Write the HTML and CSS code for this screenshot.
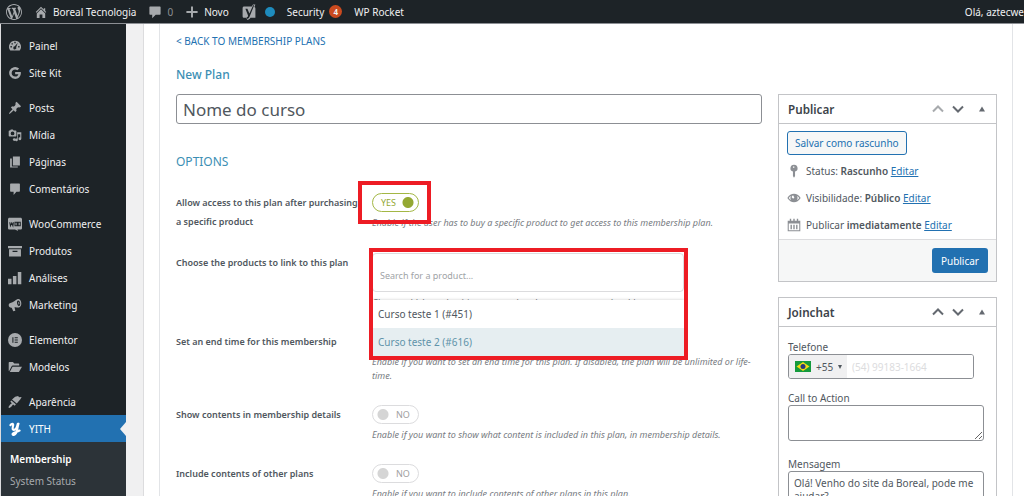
FILE: index.html
```html
<!DOCTYPE html>
<html lang="pt-BR">
<head>
<meta charset="utf-8">
<meta name="viewport" content="width=device-width, initial-scale=1">
<title>Boreal Tecnologia</title>
<link rel="stylesheet" href="styles.css">
</head>
<body>
<header class="bar">
  <a class="bar-item bar-logo" href="#" aria-label="WordPress">
    <svg class="ico-lg" viewBox="0 0 20 20"><path d="M20 10c0-5.51-4.49-10-10-10C4.48 0 0 4.49 0 10c0 5.52 4.48 10 10 10 5.51 0 10-4.48 10-10zM7.78 15.37L4.37 6.22c.55-.02 1.17-.08 1.17-.08.5-.06.44-1.13-.06-1.11 0 0-1.45.11-2.37.11-.18 0-.37 0-.58-.01C4.12 2.69 6.87 1.11 10 1.11c2.33 0 4.45.87 6.05 2.34-.68-.11-1.65.39-1.65 1.58 0 .74.45 1.36.9 2.1.35.61.55 1.36.55 2.46 0 1.49-1.4 5-1.4 5l-3.03-8.37c.54-.02.82-.17.82-.17.5-.05.44-1.25-.06-1.22 0 0-1.44.12-2.38.12-.87 0-2.33-.12-2.33-.12-.5-.03-.56 1.2-.06 1.22l.92.08 1.26 3.41zM17.41 10c.24-.64.74-1.87.43-4.25.7 1.29 1.05 2.71 1.05 4.25 0 3.29-1.73 6.24-4.4 7.78.97-2.59 1.94-5.2 2.92-7.78zM6.1 18.09C3.12 16.65 1.11 13.53 1.11 10c0-1.3.23-2.48.72-3.59C3.25 10.3 4.67 14.2 6.1 18.09zm4.03-6.63l2.58 6.98c-.86.29-1.76.45-2.71.45-.79 0-1.57-.11-2.29-.33.81-2.38 1.62-4.74 2.42-7.1z"/></svg>
  </a>
  <a class="bar-item" href="#">
    <svg class="ico" viewBox="0 0 20 20"><path d="M16 8.5l1.530 1.530-1.060 1.060L10 4.600l-6.470 6.490-1.060-1.060L10 2.500l4 4v-2h2v4zm-6-2.460l6 5.990V18.500H12v-5H8v5H4v-6.470z"/></svg>
    <span>Boreal Tecnologia</span>
  </a>
  <a class="bar-item bar-dim" href="#">
    <svg class="ico" viewBox="0 0 20 20"><path d="M3 2h14c.6 0 1 .4 1 1v10c0 .6-.4 1-1 1h-6l-5 5v-5H3c-.6 0-1-.4-1-1V3c0-.6.400-1 1-1z"/></svg>
    <span>0</span>
  </a>
  <a class="bar-item" href="#">
    <svg class="ico" viewBox="0 0 20 20"><path d="M8.600 2h2.800v6.600H18v2.800h-6.600V18H8.600v-6.600H2V8.600h6.600z"/></svg>
    <span>Novo</span>
  </a>
  <a class="bar-item" href="#" aria-label="SEO">
    <svg class="ico-yoast" viewBox="0 0 20 20"><path fill-rule="evenodd" d="M4 3h9.500L15 .5h3L16.800 3.600c.8.400 1.200 1 1.200 1.900v11.800h-6.200c-1 1.700-2.300 2.500-4.300 2.500v-2.500H4c-1.200 0-2-.8-2-2V5c0-1.200.8-2 2-2zM5.500 6l3.200 8.200c.3 1.500-.2 2.300-1.700 2.600v1.700c2-.1 3-1 3.800-3L16.500 1.500h-1.300L10.500 12 8 6z"/></svg>
    <i class="dot"></i>
  </a>
  <a class="bar-item" href="#"><span>Security</span><b class="count">4</b></a>
  <a class="bar-item" href="#"><span>WP Rocket</span></a>
  <a class="bar-item bar-user" href="#"><span>Olá, aztecwe</span></a>
</header>

<div class="layout">
  <nav class="menu" aria-label="Menu principal">
    <ul class="group">
      <li><a class="entry" href="#"><svg class="ico" viewBox="0 0 20 20"><path fill-rule="evenodd" d="M10 2.500a8.500 8.500 0 0 1 7 13.400c-.3.400-.7.600-1.200.6H4.200c-.5 0-.9-.2-1.200-.6A8.500 8.500 0 0 1 10 2.500zM9 4v2h2V4zM5 6v2h2V6zM3.500 10v2h2v-2zM14.500 10v2h2v-2zM14 5.500l-4.300 5a2.200 2.200 0 1 0 2 1.200z"/></svg>Painel</a></li>
      <li><a class="entry" href="#"><svg class="ico" viewBox="0 0 20 20"><path d="M10.200 8.500h8.100c.1.500.1 1 .1 1.600 0 4.900-3.300 8.400-8.200 8.400A8.500 8.500 0 1 1 15.900 3.700l-2.500 2.400A5 5 0 0 0 5.200 10c0 2.800 2.200 5.100 5 5.100 3.200 0 4.400-2.200 4.600-3.400h-4.600z"/></svg>Site Kit</a></li>
    </ul>
    <ul class="group">
      <li><a class="entry" href="#"><svg class="ico" viewBox="0 0 20 20"><path d="M10.440 3.020l1.820-1.820 6.360 6.350-1.830 1.820c-1.050-.68-2.480-.57-3.410.36l-.75.75c-.92.93-1.040 2.350-.350 3.410l-1.830 1.820-2.410-2.410-2.800 2.790c-.42.42-3.380 2.710-3.800 2.290s1.860-3.390 2.280-3.810l2.790-2.790L4.100 9.360l1.830-1.820c1.050.69 2.480.57 3.400-.36l.75-.75c.93-.92 1.050-2.350.36-3.410z"/></svg>Posts</a></li>
      <li><a class="entry" href="#"><svg class="ico" viewBox="0 0 20 20"><path fill-rule="evenodd" d="M4 2h3l1 1.500h3c.6 0 1 .4 1 1V11c0 .6-.4 1-1 1H2c-.6 0-1-.4-1-1V4.500c0-.6.400-1 1-1h1zM6.500 5a2.700 2.700 0 1 0 0 5.400 2.700 2.700 0 0 0 0-5.400z"/><path d="M13 6h6v9.500a2 2 0 1 1-1.500-2V8.800H14V17a2 2 0 1 1-1.500-2H13z"/><circle cx="9" cy="16.500" r="2"/></svg>Mídia</a></li>
      <li><a class="entry" href="#"><svg class="ico" viewBox="0 0 20 20"><path d="M7 2h10v13H7zM3 5h2.500v11.500H14V18H3z"/></svg>Páginas</a></li>
      <li><a class="entry" href="#"><svg class="ico" viewBox="0 0 20 20"><path d="M4 2h12c.6 0 1 .4 1 1v10c0 .6-.4 1-1 1h-4l-4 4.500V14H4c-.6 0-1-.4-1-1V3c0-.6.400-1 1-1z"/></svg>Comentários</a></li>
    </ul>
    <ul class="group">
      <li><a class="entry" href="#"><svg class="ico" viewBox="0 0 20 20"><path d="M2 1h16c1 0 2 1 2 2v13c0 1-1 2-2 2h-4.500l1 2-4.500-2H2c-1 0-2-1-2-2V3c0-1 1-2 2-2z"/><path class="cut" d="M2.500 7.500l1 5 1.800-4 1.700 4 .7-5M13 7.500h-3v5h3zM17.500 7.500h-3v5h3z"/></svg>WooCommerce</a></li>
      <li><a class="entry" href="#"><svg class="ico" viewBox="0 0 20 20"><path fill-rule="evenodd" d="M0 3h20v3H0zM1.500 7.500h17V18h-17zM6.500 9.500v2h7v-2z"/></svg>Produtos</a></li>
      <li><a class="entry" href="#"><svg class="ico" viewBox="0 0 20 20"><path d="M0 11h5v8H0zM7 7h5v12H7zM14 1.500h5V19h-5z"/></svg>Análises</a></li>
      <li><a class="entry" href="#"><svg class="ico" viewBox="0 0 20 20"><path fill-rule="evenodd" d="M14 1.500c2.800-.5 4.800 2.400 5 6 .2 3.200-1.300 5.600-3.500 6-2.300.1-4.600-.8-6.200-.3l1.200 5-3 .9-2.200-5.300C3 14 1 12.500 1 10.300 1 8.500 2 7.700 3.500 7.300 8 6.300 10 3 14 1.500zM14.500 3.500c-1.500.3-1.900 2.300-1.500 4.500.4 2.300 1.500 3.800 2.800 3.600 1.300-.3 1.900-2.200 1.500-4.300-.3-2.300-1.500-4-2.800-3.800zm.2 2.200c.9 0 1.400.8 1.500 1.900 0 1-.4 1.700-1.200 1.700z"/></svg>Marketing</a></li>
    </ul>
    <ul class="group">
      <li><a class="entry" href="#"><svg class="ico" viewBox="0 0 20 20"><circle cx="10" cy="10" r="10"/><path class="cut" d="M7 6v8M9.500 6.800H14M9.500 10H14M9.500 13.200H14"/></svg>Elementor</a></li>
      <li><a class="entry" href="#"><svg class="ico" viewBox="0 0 20 20"><path d="M1 4c0-.6.400-1 1-1h5l2 2h6c.6 0 1 .4 1 1v2H7c-1 0-1.700.4-2 1.200L1.500 16 1 15.500zM6.500 9.500H20l-4 6.800c-.3.500-.7.700-1.200.7H2.500z"/></svg>Modelos</a></li>
    </ul>
    <ul class="group">
      <li><a class="entry" href="#"><svg class="ico" viewBox="0 0 20 20"><path d="M14.500 1.500l1.200 1.700 3.800-.2-1.800 3.200-5.200 6-6.800-5.700 4.500-4zM4.800 7.800l6.500 5.500-1.600 1.900-2.500-1.500c-1.300 2-3.500 4.600-5.500 4.800-1.200-.4-1-1.500-.4-2.600.9-1.500 2.600-2.800 4.200-4L3.300 9.800z"/></svg>Aparência</a></li>
      <li>
        <a class="entry current" href="#"><svg class="ico" viewBox="2 0 17 20"><path class="swash" d="M4 4.500C5.500 2 8.500 1.800 7.800 5 7 8.500 6.500 11.500 9 11.300c3-.3 4.500-4.500 5.500-8.800M15.500 2.500c-1.500 5-2 10-3.500 13.500-1.300 3-5 3-5 1.200 0-2 5-2.700 10-5"/></svg>YITH</a>
        <ul class="sub">
          <li><a class="sub-on" href="#">Membership</a></li>
          <li><a href="#">System Status</a></li>
        </ul>
      </li>
    </ul>
  </nav>

  <main class="stage">
    <div class="panel">
      <div class="plan">
        <a class="back" href="#">&lt; BACK TO MEMBERSHIP PLANS</a>
        <h1>New Plan</h1>
        <input class="title" type="text" value="Nome do curso" aria-label="Nome do plano">
        <h2>OPTIONS</h2>
        <div class="rows">
          <div class="row">
            <label for="access">Allow access to this plan after purchasing a specific product</label>
            <div class="field marked-toggle">
              <span class="switch"><input type="checkbox" id="access" checked><span class="yes">YES</span><span class="no">NO</span></span>
              <p>Enable if the user has to buy a specific product to get access to this membership plan.</p>
            </div>
          </div>
          <div class="row">
            <label for="products">Choose the products to link to this plan</label>
            <div class="field marked-search">
              <input class="search" id="products" type="text" placeholder="Search for a product...">
              <p>Choose which product(s) a user needs to buy to access membership.</p>
              <ul class="options">
                <li>Curso teste 1 (#451)</li>
                <li class="hover">Curso teste 2 (#616)</li>
              </ul>
            </div>
          </div>
          <div class="row">
            <label for="endtime">Set an end time for this membership</label>
            <div class="field">
              <span class="switch"><input type="checkbox" id="endtime"></span>
              <p>Enable if you want to set an end time for this plan. If disabled, the plan will be unlimited or life-time.</p>
            </div>
          </div>
          <div class="row">
            <label for="contents">Show contents in membership details</label>
            <div class="field">
              <span class="switch"><input type="checkbox" id="contents"><span class="yes">YES</span><span class="no">NO</span></span>
              <p>Enable if you want to show what content is included in this plan, in membership details.</p>
            </div>
          </div>
          <div class="row">
            <label for="others">Include contents of other plans</label>
            <div class="field">
              <span class="switch"><input type="checkbox" id="others"><span class="yes">YES</span><span class="no">NO</span></span>
              <p>Enable if you want to include contents of other plans in this plan.</p>
            </div>
          </div>
        </div>
      </div>

      <aside class="side">
        <section class="box">
          <div class="box-head">
            <h3>Publicar</h3>
            <button class="arrow faded" type="button" aria-label="Subir"><svg viewBox="0 0 12 12"><path d="M1 8.500l5-5 5 5"/></svg></button>
            <button class="arrow" type="button" aria-label="Descer"><svg viewBox="0 0 12 12"><path d="M1 3.500l5 5 5-5"/></svg></button>
            <button class="arrow fold" type="button" aria-label="Alternar"><svg viewBox="0 0 12 12"><path d="M3 8.500h6L6 3.500z"/></svg></button>
          </div>
          <div class="publish">
            <button class="draft" type="button">Salvar como rascunho</button>
            <p><svg class="ico-sm" viewBox="0 0 20 20"><path fill-rule="evenodd" d="M10 1a5 5 0 0 1 1.500 9.800V17L10 19.500 8.500 17v-6.200A5 5 0 0 1 10 1zM8.500 3.500v2h2v-2z"/></svg><span>Status: <b>Rascunho</b> <a href="#">Editar</a></span></p>
            <p><svg class="ico-sm" viewBox="0 0 20 20"><path fill-rule="evenodd" d="M.500 10C3 6 6.300 4 10 4s7 2 9.500 6c-2.500 4-5.800 6-9.500 6S3 14 .5 10zM2.500 10c1 1.500 2 2.600 3.300 3.300-1.200-2-1.200-4.600 0-6.600C4.500 7.400 3.500 8.500 2.500 10zm15 0c-1-1.500-2-2.600-3.300-3.300 1.200 2 1.200 4.600 0 6.600 1.300-.7 2.300-1.800 3.300-3.300zM9 6.500a2 2 0 1 0 1.500 3z"/></svg><span>Visibilidade: <b>Público</b> <a href="#">Editar</a></span></p>
            <p><svg class="ico-sm" viewBox="0 0 20 20"><path fill-rule="evenodd" d="M1 4h3V1h2v3h3V1h2v3h3V1h2v3h3v15H1zM2.500 8v9.500h15V8zM5 9.500h2v6.500H5zM9 9.500h2v6.500H9zM13 9.500h2v6.500h-2z"/></svg><span>Publicar <b>imediatamente</b> <a href="#">Editar</a></span></p>
          </div>
          <div class="box-foot"><button class="primary" type="button">Publicar</button></div>
        </section>

        <section class="box">
          <div class="box-head">
            <h3>Joinchat</h3>
            <button class="arrow" type="button" aria-label="Subir"><svg viewBox="0 0 12 12"><path d="M1 8.500l5-5 5 5"/></svg></button>
            <button class="arrow" type="button" aria-label="Descer"><svg viewBox="0 0 12 12"><path d="M1 3.500l5 5 5-5"/></svg></button>
            <button class="arrow fold" type="button" aria-label="Alternar"><svg viewBox="0 0 12 12"><path d="M3 8.500h6L6 3.500z"/></svg></button>
          </div>
          <div class="chat">
            <label for="phone">Telefone</label>
            <div class="phone">
              <button type="button" aria-label="País: Brasil +55"><svg class="flag" viewBox="0 0 16 11"><rect width="16" height="11" fill="#149a3c"/><path d="M8 1l6.500 4.500L8 10 1.500 5.500z" fill="#f5dc14"/><circle cx="8" cy="5.500" r="2.500" fill="#26397c"/></svg><span>+55</span><i class="caret"></i></button>
              <input id="phone" type="tel" placeholder="(54) 99183-1664">
            </div>
            <label for="cta">Call to Action</label>
            <textarea id="cta"></textarea>
            <label for="msg">Mensagem</label>
            <textarea id="msg" class="tall">Olá! Venho do site da Boreal, pode me ajudar?</textarea>
          </div>
        </section>
      </aside>
    </div>
  </main>
</div>
</body>
</html>
```

FILE: styles.css
```css
*, *::before, *::after { box-sizing: border-box; }

body {
  margin: 0;
  height: 100vh;
  overflow: hidden;
  display: flex;
  flex-direction: column;
  background: #f0f0f1;
  color: #50575e;
  font: 10px/16px "Noto Sans", "Open Sans", sans-serif;
}

ul { list-style: none; margin: 0; padding: 0; }
h1, h2, h3, p { margin: 0; font-weight: 400; }
button, input, textarea { font: inherit; color: inherit; margin: 0; }
a { color: #2271b1; }
svg { flex: none; }

.ico { width: 14px; height: 14px; fill: #a7aaad; }
.ico-lg { width: 16px; height: 16px; fill: #a7aaad; }
.ico-yoast { width: 16px; height: 16px; fill: #a7aaad; }
.ico-sm { width: 14px; height: 14px; fill: #8c8f94; }
.cut { fill: none; stroke: #1d2327; stroke-width: 1.5; }
.swash { fill: none; stroke: #fff; stroke-width: 3; stroke-linecap: round; }

/* Admin bar */
.bar {
  flex: none;
  height: 24px;
  display: flex;
  align-items: center;
  gap: 12px;
  padding-left: 6px;
  background: #1d2327;
  border-bottom: 1px solid #8c8f94;
  white-space: nowrap;
}
.bar-item { display: flex; align-items: center; gap: 5px; color: #f0f0f1; text-decoration: none; }
.bar-dim { color: #8c8f94; }
.dot { width: 10px; height: 10px; margin-left: 3px; border-radius: 50%; background: #1e8cbe; }
.count {
  width: 13px;
  height: 13px;
  border-radius: 50%;
  background: #ca4a1f;
  font-size: 8px;
  line-height: 13px;
  text-align: center;
}
.bar-user { margin-left: auto; }

/* Side menu */
.layout { flex: 1; min-height: 0; display: flex; }
.menu {
  flex: none;
  width: 126px;
  padding-top: 8px;
  background: #1d2327;
  border-left: 1px solid #dcdcde;
}
.group + .group { margin-top: 8px; }
.entry {
  position: relative;
  display: flex;
  align-items: center;
  gap: 7px;
  height: 27px;
  padding-left: 7px;
  color: #f0f0f1;
  text-decoration: none;
}
.current { background: #2271b1; color: #fff; }
.current::after {
  content: "";
  position: absolute;
  right: 0;
  top: 7px;
  border: 7px solid transparent;
  border-left-width: 0;
  border-right: 6px solid #f0f0f1;
}
.sub { padding: 6px 0 20px 9px; background: #2c3338; line-height: 22px; }
.sub a { color: #a7aaad; text-decoration: none; }
.sub .sub-on { color: #fff; font-weight: 600; }

/* Content */
.stage { flex: 1; min-width: 0; padding-left: 17px; overflow: hidden; }
.panel {
  position: relative;
  display: flex;
  gap: 16px;
  min-height: 100%;
  padding: 9px 27px 0 32px;
  background: #fff;
  border-left: 1px solid #dcdcde;
}
.panel::before {
  content: "";
  position: absolute;
  inset: 0 11px 0 15px;
  border: 1px solid #e2e4e7;
  border-width: 0 1px;
}
.plan, .side { position: relative; }
.plan { flex: 1; min-width: 0; }
.side { flex: none; width: 219px; padding-top: 61px; }

.back { display: block; text-decoration: none; }
h1 { margin-top: 17px; font-size: 12px; line-height: 18px; font-weight: 500; color: #3c8fb4; }
.title {
  display: block;
  width: 100%;
  height: 30px;
  margin-top: 10px;
  padding: 0 6px;
  border: 1px solid #8c8f94;
  border-radius: 3px;
  font-size: 17px;
}
h2 { margin-top: 29px; font-size: 12px; line-height: 18px; color: #3c8fb4; }

.rows { display: grid; gap: 22px; margin-top: 22px; }
.row { display: grid; grid-template-columns: 196px 1fr; line-height: 19px; font-size: 9px; }
.row label { padding-right: 12px; font-weight: 600; }
.field { position: relative; }
.field p { margin-top: 4px; line-height: 14px; font-style: italic; color: #787c82; }

.switch { position: relative; display: block; width: 47px; height: 19px; }
.switch input {
  appearance: none;
  display: block;
  width: 47px;
  height: 19px;
  border: 1px solid #dcdcde;
  border-radius: 10px;
  background: radial-gradient(circle at 10px 50%, #d5d5d5 5px, transparent 6px) #fff;
}
.switch input:checked {
  border-color: #a3b745;
  background: radial-gradient(circle at 35px 50%, #94a832 5px, transparent 6px) #fff;
}
.switch span { position: absolute; top: 0; pointer-events: none; }
.yes { left: 9px; color: #94a832; }
.no { left: 24px; color: #a0a0a0; }
.switch input:checked ~ .no, .switch input:not(:checked) ~ .yes { display: none; }

.search {
  display: block;
  width: 312px;
  height: 39px;
  padding: 6px 7px 0;
  border: 1px solid #dcdcde;
  border-radius: 4px;
}
.search::placeholder { color: #a0a3a6; opacity: 1; }
.options {
  position: absolute;
  left: 0;
  top: 47px;
  z-index: 1;
  width: 312px;
  background: #fff;
  box-shadow: 0 0 3px rgba(0, 0, 0, .2);
  font-size: 10px;
  line-height: 28px;
}
.options li { padding-left: 6px; }
.options .hover { background: #e6eef1; color: #5f93a9; }

/* Highlight frames */
.marked-toggle::after, .marked-search::after {
  content: "";
  position: absolute;
  z-index: 2;
  border: 4px solid #ed1c24;
  pointer-events: none;
}
.marked-toggle::after { left: -14px; top: -12px; width: 73px; height: 43px; }
.marked-search::after { left: -3px; top: -5px; width: 319px; height: 112px; }

/* Meta boxes */
.box { background: #fff; border: 1px solid #c3c4c7; }
.box + .box { margin-top: 15px; }
.box-head { display: flex; align-items: center; height: 29px; padding: 0 4px 0 9px; border-bottom: 1px solid #c3c4c7; }
.box-head h3 { flex: 1; font-weight: 600; color: #3c434a; }
.arrow { width: 20px; height: 20px; padding: 4px; border: 0; background: none; }
.arrow svg { display: block; width: 12px; height: 12px; fill: none; stroke: #646970; stroke-width: 2; }
.arrow.faded svg { stroke: #a7aaad; }
.arrow.fold { margin-left: 4px; }
.arrow.fold svg { fill: #646970; stroke: none; }

.publish { padding: 7px 8px 1px; }
.draft {
  display: block;
  height: 24px;
  margin-bottom: 2px;
  padding: 0 7px;
  border: 1px solid #2271b1;
  border-radius: 3px;
  background: #f6f7f7;
  color: #2271b1;
}
.publish p { display: flex; align-items: center; gap: 5px; height: 27px; white-space: nowrap; }
.publish b { font-weight: 600; }
.box-foot { display: flex; justify-content: flex-end; padding: 8px; background: #f6f7f7; border-top: 1px solid #dcdcde; }
.primary { height: 25px; padding: 0 9px; border: 0; border-radius: 3px; background: #2271b1; color: #fff; }

.chat { display: flex; flex-direction: column; padding: 13px 12px 0 9px; line-height: 14px; }
.phone {
  display: flex;
  width: 186px;
  height: 25px;
  margin-bottom: 12px;
  border: 1px solid #8c8f94;
  border-radius: 3px;
  overflow: hidden;
}
.phone button { display: flex; flex: none; align-items: center; gap: 5px; width: 58px; padding: 0 0 0 6px; border: 0; background: #f0f0f1; }
.phone input { flex: 1; min-width: 0; padding: 0 5px; border: 0; }
.phone input::placeholder { color: #dcdcde; opacity: 1; }
.flag { width: 16px; height: 11px; }
.caret { border: 2px solid transparent; border-top: 4px solid #50575e; border-bottom: 0; }
.chat textarea { height: 36px; margin-bottom: 16px; padding: 5px 5px; border: 1px solid #8c8f94; border-radius: 3px; }
.chat .tall { height: 60px; line-height: 13px; }
```
